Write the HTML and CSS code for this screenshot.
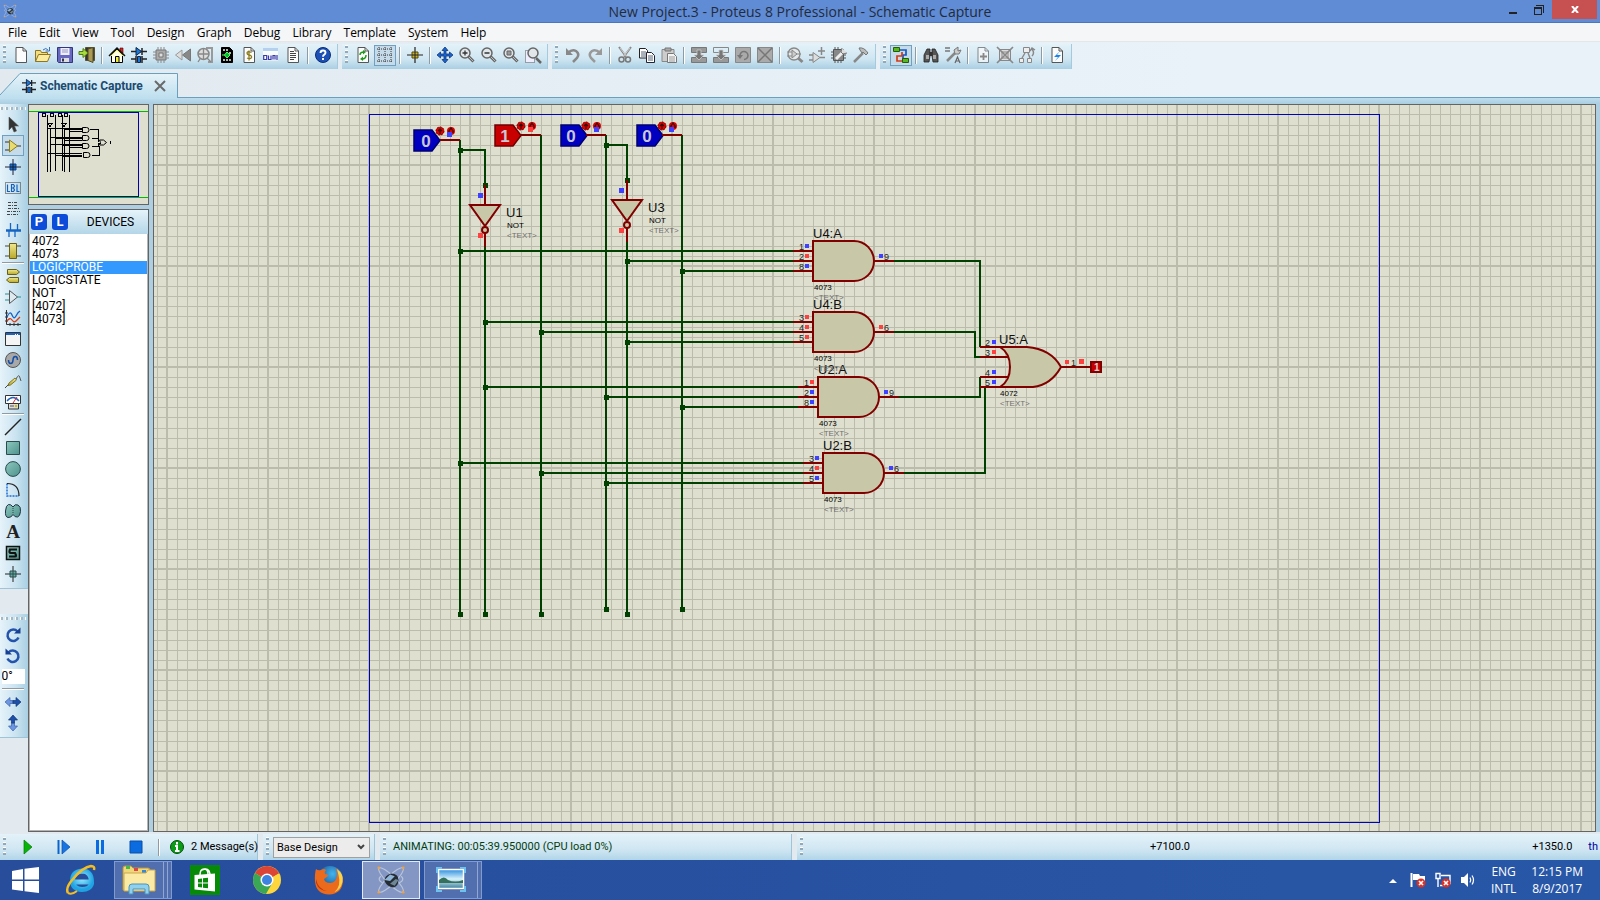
FILE: index.html
```html
<!DOCTYPE html>
<html lang="en">
<head>
<meta charset="utf-8">
<title>New Project.3 - Proteus 8 Professional - Schematic Capture</title>
<link rel="stylesheet" href="styles.css">
</head>
<body>
<svg class="defs" width="0" height="0" aria-hidden="true">
  <defs>
    <linearGradient id="teal" x1="0" y1="0" x2="1" y2="1"><stop offset="0" stop-color="#8cc8bf"/><stop offset="1" stop-color="#4e918c"/></linearGradient>
    <linearGradient id="gold" x1="0" y1="0" x2="0" y2="1"><stop offset="0" stop-color="#f0e890"/><stop offset="1" stop-color="#b8a828"/></linearGradient>
    <linearGradient id="sky" x1="0" y1="0" x2="0" y2="1"><stop offset="0" stop-color="#2f8fe0"/><stop offset=".5" stop-color="#d8f2fb"/><stop offset="1" stop-color="#3a7f9c"/></linearGradient>
    <radialGradient id="ie" cx=".5" cy=".4" r=".6"><stop offset="0" stop-color="#9be9ff"/><stop offset="1" stop-color="#1fa3e3"/></radialGradient>
    <radialGradient id="fox" cx=".6" cy=".3" r=".7"><stop offset="0" stop-color="#43b4ec"/><stop offset="1" stop-color="#123f86"/></radialGradient>
    <symbol id="i-page" viewBox="0 0 16 16"><path d="M3 .5h7l3.500 3.500v11.500h-10.500z" fill="#fcfcfc" stroke="#555"/><path d="M10 .5v3.500h3.500" fill="none" stroke="#555"/></symbol>
    <symbol id="i-comp" viewBox="0 0 16 16"><path d="M0 4.500h16M11 1v7M0 12h5M11 12h5" stroke="#222" stroke-width="1.500"/><path d="M5 .5v8l5.500-4z" fill="#1878d8" stroke="#124"/><path d="M5 9v7M11 9v7" stroke="#222" stroke-width="1.500"/><path d="M6.500 9.500h3v6h-3z" fill="#1878d8" stroke="#124"/></symbol>
    <symbol id="i-mag" viewBox="0 0 16 16"><path d="M9.500 9.500l5 5" stroke="#666" stroke-width="3"/><path d="M10 10l4 4" stroke="#bbb" stroke-width="1"/><circle cx="6" cy="6" r="5" fill="#e0e6ea" stroke="#666" stroke-width="1.500"/></symbol>
    <symbol id="i-proteus" viewBox="0 0 32 32"><g fill="none" stroke="#b9c6da" stroke-width="1.200"><ellipse cx="16" cy="16" rx="18" ry="4.500" transform="rotate(45 16 16)"/><ellipse cx="16" cy="16" rx="18" ry="4.500" transform="rotate(-45 16 16)"/><path d="M5 12q-4 4 2 7M27 12q4 4-2 7"/></g><path d="M9 17q0-6 7-8 8 0 8 7t-6 8q-6-1-9-7z" fill="#262c34"/><path d="M9 16l6-6 5 2-5 5z" fill="#8fb6d8"/><path d="M15 20l6-5 3 1-4 6z" fill="#6f8796"/><g fill="#f3a23a"><circle cx="3" cy="3" r="1.400"/><circle cx="29" cy="3" r="1.400"/><circle cx="3" cy="29" r="1.400"/><circle cx="29" cy="29" r="1.400"/></g></symbol>
    <symbol id="i-rot" viewBox="0 0 16 16"><path d="M12.500 4.500a5.700 5.700 0 1 0 1 6" fill="none" stroke="#2453ac" stroke-width="2.500"/><path d="M9 6.500h6.500v-6z" fill="#173f94"/></symbol>
    <symbol id="i-dbl" viewBox="0 0 16 16"><path d="M0 8l5-4.500v3h3v3h-3v3z" fill="#6d96e0" stroke="#3c62ae" stroke-width=".7"/><path d="M16 8l-5-4.500v3h-3v3h3v3z" fill="#1f4fa8" stroke="#133878" stroke-width=".7"/></symbol>
    <symbol id="i-err" viewBox="0 0 10 10"><circle cx="5" cy="5" r="4.500" fill="#d93327"/><path d="M3 3l4 4M7 3l-4 4" stroke="#fff" stroke-width="1.600"/></symbol>
  </defs>
</svg>

<div class="window">
  <header class="titlebar">
    <svg class="appicon" viewBox="0 0 32 32"><use href="#i-proteus"/></svg>
    <h1>New Project.3 - Proteus 8 Professional - Schematic Capture</h1>
    <div class="winctl">
      <button aria-label="Minimize"><svg width="10" height="10"><path d="M1 8h8" stroke="#222" stroke-width="2"/></svg></button>
      <button aria-label="Restore"><svg width="10" height="10" shape-rendering="crispEdges"><path d="M2 .5h7.500v7" fill="none" stroke="#222"/><path d="M.5 3h7v6.500h-7z" fill="none" stroke="#222"/><path d="M0 3h8" stroke="#222" stroke-width="2"/></svg></button>
      <button class="close" aria-label="Close"><svg width="8" height="7"><path d="M1 0l6 7M7 0l-6 7" stroke="#fff" stroke-width="2"/></svg></button>
    </div>
  </header>

  <nav class="menu">
    <button>File</button><button>Edit</button><button>View</button><button>Tool</button><button>Design</button><button>Graph</button><button>Debug</button><button>Library</button><button>Template</button><button>System</button><button>Help</button>
  </nav>

  <div class="toolbars">
    <div class="tb tb-file">
      <i class="grip"></i>
      <button aria-label="New"><svg viewBox="0 0 16 16"><use href="#i-page"/></svg></button>
      <button aria-label="Open"><svg viewBox="0 0 16 16"><path d="M.5 14.500v-11h5l1 2h6v3" fill="#f3dd7c" stroke="#8c7524"/><path d="M.5 14.500l3-7h12l-3 7z" fill="#fbeb9c" stroke="#8c7524"/><path d="M8 3q3-3 5 0M14.500 0v4h-4" fill="none" stroke="#3b6fb5"/></svg></button>
      <button aria-label="Save"><svg viewBox="0 0 16 16"><path d="M.5.5h15v15h-14l-1-1z" fill="#6868c0" stroke="#35357c"/><path d="M3.500 1h9v7h-9z" fill="#eef"/><path d="M4 11h8v4h-8z" fill="#ddd"/><path d="M5 11.500h2v3h-2z" fill="#335"/><path d="M5 3h6M5 5h6" stroke="#99b"/></svg></button>
      <button aria-label="Close project"><svg viewBox="0 0 16 16"><path d="M6.500.5h9v13h-9z" fill="#333" stroke="#5a5030"/><path d="M9 2l5-1.500v15l-5-2z" fill="#aa9a54" stroke="#554c22"/><path d="M0 4.500h4v-3l5 4.500-5 4.500v-3h-4z" fill="#a8dc38" stroke="#4f7c10"/></svg></button>
      <i class="sep"></i>
      <button aria-label="Home"><svg viewBox="0 0 16 16"><path d="M11 1h3v5h-3z" fill="#d22" stroke="#400" stroke-width=".6"/><path d="M2.500 8v7.500h11v-7.500l-5.500-6z" fill="#ffe" stroke="#000"/><path d="M0 9l8-8 8 8" fill="none" stroke="#111" stroke-width="1.500"/><path d="M2 9l6-6 6 6" fill="none" stroke="#ee4"/><path d="M6.500 9.500h3.500v6h-3.500z" fill="#ee3" stroke="#000"/></svg></button>
      <button aria-label="Schematic"><svg viewBox="0 0 16 16"><use href="#i-comp"/></svg></button>
      <button aria-label="PCB"><svg viewBox="0 0 16 16"><path d="M3 3h10v10h-10z" fill="#aaa" stroke="#777"/><path d="M6 6h4v4h-4z" fill="#ddd" stroke="#777"/><path d="M5 0v3M8 0v3M11 0v3M5 13v3M8 13v3M11 13v3M0 5h3M0 8h3M0 11h3M13 5h3M13 8h3M13 11h3" stroke="#888"/></svg></button>
      <button aria-label="3D view"><svg viewBox="0 0 16 16"><path d="M7 3v10l-6.500-5z" fill="#ddd" stroke="#999"/><path d="M15.500 2v12l-8-6z" fill="#888" stroke="#777"/></svg></button>
      <button aria-label="Gerber"><svg viewBox="0 0 16 16"><path d="M9 1h6v14h-4" fill="none" stroke="#999" stroke-width="2"/><circle cx="6.500" cy="7" r="5.500" fill="#ddd" stroke="#888" stroke-width="1.500"/><path d="M6.500 1.500v11M1 7h11M10 11l4 4M3 12l-2 3" stroke="#888" stroke-width="1.300"/></svg></button>
      <button aria-label="Design explorer"><svg viewBox="0 0 16 16"><path d="M2.500 .5h8l3 3v12h-11z" fill="#000" stroke="#000"/><path d="M4 3h5M4 13h8M11 5v3" stroke="#e8f8e8" stroke-width="1.500" stroke-dasharray="2 1"/><path d="M5.500 8l2.500-3 3 3-3 3z" fill="#0b3" stroke="#5f5"/><path d="M3 8h3" stroke="#5f5"/></svg></button>
      <button aria-label="Bill of materials"><svg viewBox="0 0 16 16"><use href="#i-page"/><path d="M10.500 5.500q-4-2-4.500.5 0 1.500 2 2 3 .5 2.500 2.500-1 2-4.500.5M8 3.500v10" fill="none" stroke="#8a7a18" stroke-width="1.300"/></svg></button>
      <button aria-label="Source code"><svg viewBox="0 0 16 16"><path d="M0 1.500h15v12h-15z" fill="#f8fbff"/><path d="M0 1h15v3h-15z" fill="#b4d0ee"/><path d="M.7 8.500h3v4h-3zM5.500 8.500v4h2.500v-4M10 12.500v-4h2v4M14 8v5" fill="none" stroke="#3838a8" stroke-width="1.200"/></svg></button>
      <button aria-label="Notes"><svg viewBox="0 0 16 16"><use href="#i-page"/><path d="M5 4.500h4M5 6.500h6M5 8.500h6M5 10.500h6M5 12.500h4" stroke="#444"/></svg></button>
      <i class="sep"></i>
      <button aria-label="Help"><svg viewBox="0 0 16 16"><circle cx="8" cy="8" r="7.500" fill="#1c50b4" stroke="#0a2c78"/><path d="M5.500 6q0-2.500 2.500-2.500t2.500 2.300q0 1.200-1.500 2-1 .5-1 2M8 11v2" fill="none" stroke="#fff" stroke-width="1.900"/></svg></button>
    </div>
    <div class="tb tb-view">
      <i class="grip"></i>
      <button aria-label="Redraw"><svg viewBox="0 0 16 16"><use href="#i-page"/><path d="M5 8q0-3 4-3M11 8q0 4-4 4" fill="none" stroke="#1c9a1c" stroke-width="1.500"/><path d="M8 3l3 2-3 2.500zM8 9.500l-3 2.500 3 2z" fill="#1c9a1c"/></svg></button>
      <button class="on" aria-label="Grid"><svg viewBox="0 0 16 16"><path d="M0 2h16M0 8h16M0 14h16M2 0v16M8 0v16M14 0v16" stroke="#333" stroke-dasharray="1 1"/></svg></button>
      <i class="sep"></i>
      <button aria-label="Origin"><svg viewBox="0 0 16 16"><path d="M0 8h16M8 0v16" stroke="#222" stroke-width="1.200"/><path d="M5 5h6v6h-6z" fill="#c8b428" stroke="#554a08"/><path d="M5 8h6M8 5v6" stroke="#222"/></svg></button>
      <i class="sep"></i>
      <button aria-label="Pan"><svg viewBox="0 0 16 16"><path d="M8 0l3 3.500h-2v3.500h3.500v-2l3.500 3-3.500 3v-2h-3.500v3.500h2l-3 3.500-3-3.500h2v-3.500h-3.500v2l-3.500-3 3.500-3v2h3.500v-3.500h-2z" fill="#1c62cc" stroke="#123a7c" stroke-width=".8"/></svg></button>
      <button aria-label="Zoom in"><svg viewBox="0 0 16 16"><use href="#i-mag"/><path d="M3.500 6h5M6 3.500v5" stroke="#333" stroke-width="1.300"/></svg></button>
      <button aria-label="Zoom out"><svg viewBox="0 0 16 16"><use href="#i-mag"/><path d="M3.500 6h5" stroke="#333" stroke-width="1.500"/></svg></button>
      <button aria-label="Zoom all"><svg viewBox="0 0 16 16"><use href="#i-mag"/><path d="M4 4h4v4h-4z" fill="#999" stroke="#666"/></svg></button>
      <button aria-label="Zoom area"><svg viewBox="0 0 16 16"><path d="M.5 3.500h9v12h-9z" fill="#eef" stroke="#555" stroke-dasharray="1 1"/><path d="M11 11l5 5" stroke="#666" stroke-width="2.500"/><circle cx="8" cy="6" r="5" fill="#e0e6ea" stroke="#666" stroke-width="1.500"/></svg></button>
    </div>
    <div class="tb tb-edit">
      <i class="grip"></i>
      <button aria-label="Undo"><svg viewBox="0 0 16 16"><path d="M3 6q4-4 8-2 4 3 1 7l-4 4" fill="none" stroke="#888" stroke-width="2.500"/><path d="M1 1v7h7z" fill="#888"/></svg></button>
      <button aria-label="Redo"><svg viewBox="0 0 16 16"><path d="M13 6q-4-4-8-2-4 3-1 7l4 4" fill="none" stroke="#999" stroke-width="2.500"/><path d="M15 1v7h-7z" fill="#999"/></svg></button>
      <i class="sep"></i>
      <button aria-label="Cut"><svg viewBox="0 0 16 16"><path d="M2 0l8 11M14 0l-8 11" stroke="#888" stroke-width="2"/><path d="M3 1l7 9M13 1l-7 9" stroke="#ddd" stroke-width=".8"/><circle cx="4.500" cy="12.500" r="2.500" fill="none" stroke="#777" stroke-width="1.500"/><circle cx="11" cy="12.500" r="2.500" fill="none" stroke="#777" stroke-width="1.500"/></svg></button>
      <button aria-label="Copy"><svg viewBox="0 0 16 16"><path d="M.5 1.500h6l2 2v7.500h-8z" fill="#fff" stroke="#222"/><path d="M2 5h5M2 7h5M2 9h5" stroke="#567"/><path d="M7.500 5.500h5l3 3v7h-8z" fill="#fff" stroke="#223"/><path d="M9 9h5M9 11h5M9 13h5" stroke="#567"/></svg></button>
      <button aria-label="Paste"><svg viewBox="0 0 16 16"><path d="M1 2.500h12v12h-12z" fill="#ccc" stroke="#888"/><path d="M4 1h6v3h-6z" fill="#aaa" stroke="#777"/><path d="M6.500 6.500h6l3 3v6h-9z" fill="#f4f4f4" stroke="#777"/><path d="M8 10h6M8 12h6M8 14h6" stroke="#999"/></svg></button>
      <i class="sep"></i>
      <button aria-label="Block copy"><svg viewBox="0 0 16 16"><path d="M.5.5h15v5h-15zM.5 10.500h15v5h-15z" fill="#999" stroke="#777"/><path d="M6 3h4v5h3l-5 5-5-5h3z" fill="#777" stroke="#ccc" stroke-width=".8"/></svg></button>
      <button aria-label="Block move"><svg viewBox="0 0 16 16"><path d="M.5.5h15v5h-15z" fill="none" stroke="#888"/><path d="M.5 10.500h15v5h-15z" fill="#999" stroke="#777"/><path d="M6 3h4v5h3l-5 5-5-5h3z" fill="#777" stroke="#ccc" stroke-width=".8"/></svg></button>
      <button aria-label="Block rotate"><svg viewBox="0 0 16 16"><path d="M.5.5h15v15h-15z" fill="#aaa" stroke="#888"/><path d="M5 9a4 4 0 1 1 4 3.500" fill="none" stroke="#777" stroke-width="1.500"/><path d="M2 8h6l-3 4z" fill="#777"/></svg></button>
      <button aria-label="Block delete"><svg viewBox="0 0 16 16"><path d="M.5.5h15v15h-15z" fill="#aaa" stroke="#888"/><path d="M1 1l14 14M15 1l-14 14" stroke="#777" stroke-width="1.500"/></svg></button>
      <i class="sep"></i>
      <button aria-label="Pick parts"><svg viewBox="0 0 16 16"><path d="M11 11l4.500 4" stroke="#888" stroke-width="3"/><circle cx="7" cy="7" r="6" fill="#e4e8ea" stroke="#888" stroke-width="1.300"/><path d="M0 5h5M0 9h5M9 7h5M5 3v8l5-4z" fill="#ccc" stroke="#888"/></svg></button>
      <button aria-label="Make device"><svg viewBox="0 0 16 16"><path d="M4 5.500v10l7-5z" fill="#ddd" stroke="#888"/><path d="M0 8h4M0 13h4M11 10.500h5M12.500 0v8M9 4h7" stroke="#888" stroke-width="1.500"/></svg></button>
      <button aria-label="Packaging tool"><svg viewBox="0 0 16 16"><path d="M2.500 2.500h10v11h-10z" fill="#888" stroke="#555"/><path d="M4 0v3M7 0v3M4 13v3M7 13v3M10 13v3M0 5h3M0 8h3M0 11h3M12 8h3M12 11h3" stroke="#555"/><path d="M5 12l6-6" stroke="#eee" stroke-width="3"/><path d="M11 1l-1 4 2 2 4-1" fill="#ddd" stroke="#777"/></svg></button>
      <button aria-label="Decompose"><svg viewBox="0 0 16 16"><path d="M1 15l9-9" stroke="#888" stroke-width="2.500"/><path d="M6 1q5-1 9 5l-2 2-3-3-1 1-2-3z" fill="#bbb" stroke="#777"/></svg></button>
    </div>
    <div class="tb tb-tools">
      <i class="grip"></i>
      <button class="on" aria-label="Wire autorouter"><svg viewBox="0 0 16 16"><path d="M6 3h7v5h-3v5" fill="none" stroke="#1458c8" stroke-width="1.700"/><path d="M9 5v4h-5v5h6" fill="none" stroke="#d43c14" stroke-width="1.700"/><path d="M.5.5h6v4h-6zM9.500 11.500h6v4h-6z" fill="#58b820" stroke="#245c08"/></svg></button>
      <i class="sep"></i>
      <button aria-label="Find"><svg viewBox="0 0 16 16"><path d="M1 8l3-6h3v7l-1 6h-5zM15 8l-3-6h-3v7l1 6h5z" fill="#555" stroke="#222" stroke-width=".8"/><path d="M3 8h3v4h-3zM10 8h3v4h-3z" fill="#aaa"/><path d="M6.500 5h3v4h-3z" fill="#333"/></svg></button>
      <button aria-label="Property tool"><svg viewBox="0 0 16 16"><path d="M0 1h5M0 4h5" stroke="#777" stroke-width="1.500"/><path d="M2 14l8-8" stroke="#888" stroke-width="2.500"/><path d="M13 0l-4 3 1 4 4 0 2-4-3 1z" fill="#ccc" stroke="#777"/><path d="M10 16l2.500-6 2.500 6M11 14h3" fill="none" stroke="#666" stroke-width="1.200"/></svg></button>
      <i class="sep"></i>
      <button aria-label="New sheet"><svg viewBox="0 0 16 16"><g opacity=".65"><use href="#i-page"/></g><path d="M5 9.500h7M8.500 6v7" stroke="#888" stroke-width="1.800"/></svg></button>
      <button aria-label="Remove sheet"><svg viewBox="0 0 16 16"><path d="M2.500 2.500h11v11h-11z" fill="#ddd" stroke="#888"/><path d="M5 5h6v6h-6z" fill="none" stroke="#888"/><path d="M0 0l16 16M16 0l-16 16" stroke="#888" stroke-width="1.700"/></svg></button>
      <button aria-label="Exit to parent"><svg viewBox="0 0 16 16"><path d="M4.500.5h6v5h-6zM.5 11.500h4v4h-4zM8.500 11.500h4v4h-4z" fill="#eee" stroke="#888"/><path d="M6 6l-3 5M9 6l2 5M13 2q3 4 0 7M11 4l2-3 3 2" fill="none" stroke="#888" stroke-width="1.400"/></svg></button>
      <i class="sep"></i>
      <button aria-label="Electrical rules check"><svg viewBox="0 0 16 16"><use href="#i-page"/><path d="M11 4l-6 6h4l-3 4 6-6h-4z" fill="#1c84e8"/></svg></button>
    </div>
  </div>

  <div class="tabs">
    <div class="tab">
      <svg class="tabshape" viewBox="0 0 178 26" preserveAspectRatio="none"><defs><linearGradient id="tg" x1="0" y1="0" x2="0" y2="1"><stop offset="0" stop-color="#e6f3f9"/><stop offset="1" stop-color="#bcdeee"/></linearGradient></defs><path d="M0 22 20 .5H177.500V26H0z" fill="url(#tg)"/><path d="M0 22 20 .5H177.500V25" fill="none" stroke="#6a9fbe"/></svg>
      <svg class="tabicon" viewBox="0 0 16 16"><use href="#i-comp"/></svg>
      <span>Schematic Capture</span>
      <button aria-label="Close tab"><svg width="12" height="12"><path d="M1 1l10 10M11 1l-10 10" stroke="#6a6a6a" stroke-width="2"/></svg></button>
    </div>
  </div>

  <main class="work">
    <aside class="modes">
      <div class="mode-set">
        <i class="hgrip"></i>
        <button aria-label="Selection"><svg viewBox="0 0 16 16"><path d="M4 0v13l3-3 2 5 2.500-1-2-5h4z" fill="#333" stroke="#555" stroke-width=".6"/></svg></button>
        <button class="on" aria-label="Component"><svg viewBox="0 0 16 16"><path d="M0 4h4M0 12h4M12 8h4" stroke="#333"/><path d="M4.500 2v12l8-6z" fill="#e8dc70" stroke="#8c7c20"/></svg></button>
        <button aria-label="Junction dot"><svg viewBox="0 0 16 16"><path d="M0 8h16M8 0v16" stroke="#223"/><path d="M5 5h6v6h-6z" fill="#1c6ccc" stroke="#123f80"/><path d="M5 8h6M8 5v6" stroke="#123"/></svg></button>
        <button aria-label="Wire label"><svg viewBox="0 0 16 16"><path d="M.5 2.500h15v11h-15z" fill="none" stroke="#333" stroke-dasharray="1 1"/><path d="M2.500 4.500v7h2.500M6.500 4.500v7h2l1-1.500-1-2h-2 2l1-2-1-1.500zM12 4.500v7h2.500" fill="none" stroke="#1460c0" stroke-width="1.200"/></svg></button>
        <button aria-label="Text script"><svg viewBox="0 0 16 16"><path d="M3 1.500h10M3 4.500h10M3 7.500h11M2 10.500h13M2 13.500h12" stroke="#444" stroke-dasharray="3 1 1 1"/></svg></button>
        <button aria-label="Bus"><svg viewBox="0 0 16 16"><path d="M1 8.500h15" stroke="#1464c4" stroke-width="2.500"/><path d="M5.500 1v7M12.500 2v6M4 9v6M10 9v6" stroke="#1464c4" stroke-width="1.300"/></svg></button>
        <button aria-label="Subcircuit"><svg viewBox="0 0 16 16"><path d="M0 3h16M0 13h16" stroke="#444"/><path d="M4.500.5h7v15h-7z" fill="url(#gold)" stroke="#6c6010"/></svg></button>
        <i class="hsep"></i>
        <button aria-label="Terminals"><svg viewBox="0 0 16 16"><path d="M2.500 1.500h9l3 2.500-3 2.500h-9z" fill="url(#gold)" stroke="#6c6010"/><path d="M13.500 9.500h-9l-3 2.500 3 2.500h9z" fill="url(#gold)" stroke="#6c6010"/></svg></button>
        <button aria-label="Device pins"><svg viewBox="0 0 16 16"><path d="M4.500 1.500v13l8-6.500z" fill="#dfeaf0" stroke="#555"/><path d="M0 5h4M0 11h4M12 8h4" stroke="#2c8c8c"/></svg></button>
        <button aria-label="Graph"><svg viewBox="0 0 16 16"><path d="M1.500 0v14.500h14.500M0 3h3M0 7h3M0 11h3M5 13v3M9 13v3M13 13v3" stroke="#333" fill="none"/><path d="M2 7q3-7 5-2t4 1 4-5" fill="none" stroke="#1460c8" stroke-width="1.300"/><path d="M2 11q3-4 5-1t4 1 4-4" fill="none" stroke="#d83c14" stroke-width="1.300"/></svg></button>
        <button aria-label="Active popup"><svg viewBox="0 0 16 16"><path d="M.5 1.500h15v13h-15z" fill="#f4f4f4" stroke="#333"/><path d="M1 2h14v2h-14z" fill="#1c62c0"/><path d="M10 3.500h4" stroke="#fff" stroke-dasharray="1 1"/></svg></button>
        <button aria-label="Generator"><svg viewBox="0 0 16 16"><circle cx="8" cy="8" r="7.500" fill="#a8a8a8" stroke="#555"/><path d="M3.500 8q0 3.500 2.200 3.500t2.300-3.500 2.300-3.500 2.200 3.500" fill="none" stroke="#1450a8" stroke-width="1.500"/></svg></button>
        <button aria-label="Probe"><svg viewBox="0 0 16 16"><path d="M0 15l4-4" stroke="#444"/><path d="M3 12.500l1-2.500 6-5 1.500 2-6 5z" fill="url(#gold)" stroke="#6c6010" stroke-width=".8"/><path d="M11 6q3-6 4-1l1 3" fill="none" stroke="#555"/></svg></button>
        <button aria-label="Instruments"><svg viewBox="0 0 16 16"><path d="M.5 1.500h15v8h-15z" fill="#fff" stroke="#333"/><path d="M2 7q6-7 12 0" fill="none" stroke="#1c62c0" stroke-width="1.300"/><path d="M8 9l4-6" stroke="#d22"/><path d="M3.500 9.500h10v5.500h-10z" fill="#ddd" stroke="#333"/><path d="M5 12h4" stroke="#555"/><circle cx="11" cy="12" r="1.200" fill="#cb0"/></svg></button>
        <i class="hsep"></i>
        <button aria-label="Line"><svg viewBox="0 0 16 16"><path d="M0 16L16 0" stroke="#222" stroke-width="1.400"/></svg></button>
        <button aria-label="Box"><svg viewBox="0 0 16 16"><path d="M1.500 1.500h13v13h-13z" fill="url(#teal)" stroke="#2c4c4c"/></svg></button>
        <button aria-label="Circle"><svg viewBox="0 0 16 16"><circle cx="8" cy="8" r="7.400" fill="url(#teal)" stroke="#2c4c4c"/></svg></button>
        <button aria-label="Arc"><svg viewBox="0 0 16 16"><path d="M2 1.500v12.500h12" fill="none" stroke="#1c6cd8" stroke-width="1.500" stroke-dasharray="2 1"/><path d="M2 1.500q12 0 12 12.500" fill="none" stroke="#222" stroke-width="1.200"/></svg></button>
        <button aria-label="Path"><svg viewBox="0 0 16 16"><path d="M8 4q-2-3-4.500-2.500t-3 6.500 2.500 6.500 5-3q2 3 4.500 2.500t3-5.500-2.500-6.500-5 2z" fill="url(#teal)" stroke="#234"/><path d="M8 5v6" stroke="#2c4c4c" stroke-dasharray="1 1"/></svg></button>
        <button class="serif-a">A</button>
        <button aria-label="Symbol"><svg viewBox="0 0 16 16"><path d="M1.500 1.500h13v13h-13z" fill="url(#teal)" stroke="#111" stroke-width="1.500"/><path d="M12 4.500h-7q-1.500 3.500 1 3.500h4q2 3.500 0 3.500h-6" fill="none" stroke="#111" stroke-width="2.200"/></svg></button>
        <button aria-label="Marker"><svg viewBox="0 0 16 16"><path d="M0 8h16M8 0v16" stroke="#222"/><path d="M5 5h6v6h-6z" fill="#62aca4" stroke="#2c4c4c"/><path d="M5 8h6M8 5v6" stroke="#2c4c4c"/></svg></button>
      </div>
      <div class="mode-set">
        <i class="hgrip"></i>
        <button aria-label="Rotate clockwise"><svg viewBox="0 0 16 16"><use href="#i-rot"/></svg></button>
        <button aria-label="Rotate anticlockwise"><svg viewBox="0 0 16 16"><g transform="matrix(-1 0 0 1 16 0)"><use href="#i-rot"/></g></svg></button>
        <input class="angle" type="text" value="0°" aria-label="Angle">
        <i class="hsep"></i>
        <button aria-label="Mirror horizontally"><svg viewBox="0 0 16 16"><use href="#i-dbl"/></svg></button>
        <button aria-label="Mirror vertically"><svg viewBox="0 0 16 16"><g transform="rotate(-90 8 8)"><use href="#i-dbl"/></g></svg></button>
      </div>
    </aside>

    <section class="side">
      <div class="overview">
        <svg viewBox="29 105 119 99" shape-rendering="crispEdges">
          <path d="M29 111.500h120M29 197.500h120" stroke="#0b0"/>
          <rect x="38.500" y="112.500" width="100" height="84" fill="none" stroke="#0000b0"/>
          <path d="M47.500 115v57M50.500 128v44M55.500 115v56M62.500 115v56M64.500 128v44M69.500 115v57" fill="none" stroke="#000"/>
          <path d="M48 128.500h34M65 129.500h17M70 131.500h12M51 137.500h31M56 138.500h26M65 140h17M51 144.500h31M63 145.500h19M70 147.500h12M48 153.500h34M56 155h26M63 156h19M90 129.500h8.500v12M92 138h6M92 146.500h6.500v-3h2M92 155.500h7.500v-10" fill="none" stroke="#000"/>
          <path d="M42 113.500h3v3h-3zM50 113.500h3v3h-3zM58 113.500h3v3h-3zM64.500 113.500h3v3h-3zM48 123.500h4l-2 3zM62 123.500h4l-2 3z" fill="none" stroke="#000"/>
          <g fill="none" stroke="#000" shape-rendering="auto"><path id="mg" d="M82.500 127.500h4a2.500 2.500 0 0 1 0 5h-4z"/><use href="#mg" y="8"/><use href="#mg" y="16"/><use href="#mg" x="1" y="25"/><path d="M99.500 140h4l3 2.500-3 2.500h-4l1-2.500z"/><path d="M110.500 141v3"/></g>
        </svg>
      </div>
      <div class="devices">
        <div class="dev-head"><button>P</button><button>L</button><span>DEVICES</span></div>
        <ul>
          <li>4072</li><li>4073</li><li class="sel">LOGICPROBE</li><li>LOGICSTATE</li><li>NOT</li><li>[4072]</li><li>[4073]</li>
        </ul>
      </div>
    </section>

    <section class="sheet">
      <svg width="100%" height="100%">
        <defs>
          <pattern id="grid" patternUnits="userSpaceOnUse" x="166" y="164" width="101" height="101">
            <rect width="101" height="101" fill="#dfdfcf"/>
            <path d="M11.500 0v101M21.500 0v101M31.500 0v101M41.500 0v101M52.500 0v101M62.500 0v101M72.500 0v101M82.500 0v101M92.500 0v101M0 11.500h101M0 21.500h101M0 31.500h101M0 41.500h101M0 51.500h101M0 62.500h101M0 72.500h101M0 82.500h101M0 92.500h101" stroke="#bcbcac"/>
            <path d="M1 0v101M0 1h101" stroke="#bcbcac" stroke-width="2"/>
          </pattern>
          <g id="state"><path d="M0 0h18l8 10.500-8 10.500h-18z" stroke-width="1.500"/></g>
          <g id="tog"><circle cx="26" cy="1" r="4" fill="#e00000"/><circle cx="37" cy="1" r="4" fill="#e00000"/><path d="M26 4v-5M24 1l2-2 2 2M35 3v-2l2-3 2 3v2" fill="none" stroke="#300" stroke-width="1.200"/><circle cx="26" cy="1" r="4" fill="none" stroke="#700" stroke-dasharray="2 1"/><path d="M26 10h20" stroke="#800000" stroke-width="2"/></g>
          <g id="not" fill="#c8c8a8" stroke="#800000" stroke-width="2"><path d="M0-20v20M0 28v14"/><path d="M-15 0h30l-15 21z"/><circle cy="25" r="3"/></g>
          <g id="and" fill="#c8c8a8" stroke="#800000" stroke-width="2"><path d="M-20 10h20M-20 20h20M-20 30h20M61 20h20"/><path d="M0 0h41a20 20 0 0 1 0 40h-41z"/></g>
          <rect id="sq" x="-2" y="-2" width="4" height="4"/>
          <rect id="sq5" x="-3" y="-2" width="5" height="5"/>
          <rect id="dot" x="-2" y="-2" width="5" height="5"/>
        </defs>
        <g transform="translate(-154 -105)">
          <rect x="154" y="105" width="100%" height="100%" fill="url(#grid)"/>
          <rect x="369.500" y="114.500" width="1010" height="708" fill="none" stroke="#0000c0"/>
          <g class="wire">
            <path d="M460 140v474M460 150h25v35M485 245v369M541 135v479M606 135v474M606 145h21v35M627 240v374M682 135v474"/>
            <path d="M460 251h333M627 261h166M682 271h111M485 322h308M541 332h252M627 342h166M485 387h313M606 397h192M682 407h116M460 463h343M541 473h262M606 483h197"/>
            <path d="M894 261h86v86M894 332h81v25h6M899 397h81v-20M904 473h81v-86"/>
          </g>
          <g fill="#004000">
            <use href="#dot" x="460" y="150"/><use href="#dot" x="485" y="185"/><use href="#dot" x="606" y="145"/><use href="#dot" x="627" y="180"/>
            <use href="#dot" x="460" y="251"/><use href="#dot" x="627" y="261"/><use href="#dot" x="682" y="271"/><use href="#dot" x="485" y="322"/><use href="#dot" x="541" y="332"/><use href="#dot" x="627" y="342"/><use href="#dot" x="485" y="387"/><use href="#dot" x="606" y="397"/><use href="#dot" x="682" y="407"/><use href="#dot" x="460" y="463"/><use href="#dot" x="541" y="473"/><use href="#dot" x="606" y="483"/>
            <use href="#dot" x="460" y="614"/><use href="#dot" x="485" y="614"/><use href="#dot" x="541" y="614"/><use href="#dot" x="606" y="609"/><use href="#dot" x="627" y="614"/><use href="#dot" x="682" y="609"/>
          </g>
          <g fill="#0000c0" stroke="#000070"><use href="#state" x="414" y="130"/><use href="#state" x="561" y="125"/><use href="#state" x="637" y="125"/></g>
          <g fill="#c80000" stroke="#700000"><use href="#state" x="495" y="125"/></g>
          <use href="#tog" x="414" y="130"/><use href="#tog" x="495" y="125"/><use href="#tog" x="560" y="125"/><use href="#tog" x="636" y="125"/>
          <g class="bit"><text x="426" y="147">0</text><text x="505" y="142">1</text><text x="571" y="142">0</text><text x="647" y="142">0</text></g>
          <use href="#not" x="485" y="205"/><use href="#not" x="627" y="200"/>
          <use href="#and" x="813" y="241"/><use href="#and" x="813" y="312"/><use href="#and" x="818" y="377"/><use href="#and" x="823" y="453"/>
          <g fill="#c8c8a8" stroke="#800000" stroke-width="2">
            <path d="M1000 347h27q24 2 34 20-10 18-28 20h-33q10-6 10-20t-10-20z"/>
            <path d="M980 347h21M980 357h29M980 377h29M980 387h21M1061 367h29"/>
            <rect x="1091" y="362" width="10" height="10" fill="#c80000"/>
          </g>
          <g fill="#4040ff">
            <use href="#sq5" x="450" y="134"/><use href="#sq5" x="597" y="129"/><use href="#sq5" x="672" y="129"/><use href="#sq5" x="481" y="195"/><use href="#sq5" x="622" y="190"/>
            <use href="#sq" x="807" y="246"/><use href="#sq" x="807" y="266"/><use href="#sq" x="881" y="256"/><use href="#sq" x="812" y="392"/><use href="#sq" x="812" y="402"/><use href="#sq" x="886" y="392"/><use href="#sq" x="817" y="458"/><use href="#sq" x="817" y="478"/><use href="#sq" x="891" y="468"/>
            <use href="#sq" x="994" y="342"/><use href="#sq" x="994" y="372"/><use href="#sq" x="994" y="382"/>
          </g>
          <g fill="#ff4040">
            <use href="#sq5" x="531" y="129"/><use href="#sq5" x="481" y="235"/><use href="#sq5" x="622" y="230"/>
            <use href="#sq" x="807" y="256"/><use href="#sq" x="807" y="317"/><use href="#sq" x="807" y="327"/><use href="#sq" x="807" y="337"/><use href="#sq" x="881" y="327"/><use href="#sq" x="812" y="382"/><use href="#sq" x="817" y="468"/><use href="#sq" x="994" y="352"/><use href="#sq" x="1067" y="362"/><use href="#sq5" x="1082" y="361"/>
          </g>
          <g class="pin">
            <text x="799" y="250">1</text><text x="799" y="260">2</text><text x="799" y="270">8</text><text x="884" y="260">9</text>
            <text x="799" y="321">3</text><text x="799" y="331">4</text><text x="799" y="341">5</text><text x="884" y="331">6</text>
            <text x="804" y="386">1</text><text x="804" y="396">2</text><text x="804" y="406">8</text><text x="889" y="396">9</text>
            <text x="809" y="462">3</text><text x="809" y="472">4</text><text x="809" y="482">5</text><text x="894" y="472">6</text>
            <text x="985" y="346">2</text><text x="985" y="356">3</text><text x="985" y="376">4</text><text x="985" y="386">5</text><text x="1071" y="366">1</text>
          </g>
          <text class="probe" x="1094" y="371">1</text>
          <g class="ref">
            <text x="506" y="217">U1</text><text x="648" y="212">U3</text><text x="813" y="238">U4:A</text><text x="813" y="309">U4:B</text><text x="818" y="374">U2:A</text><text x="823" y="450">U2:B</text><text x="999" y="344">U5:A</text>
          </g>
          <g class="val">
            <text x="507" y="228">NOT</text><text x="649" y="223">NOT</text><text x="814" y="290">4073</text><text x="814" y="361">4073</text><text x="819" y="426">4073</text><text x="824" y="502">4073</text><text x="1000" y="396">4072</text>
          </g>
          <g class="val dim">
            <text x="507" y="238">&lt;TEXT&gt;</text><text x="649" y="233">&lt;TEXT&gt;</text><text x="814" y="300">&lt;TEXT&gt;</text><text x="814" y="371">&lt;TEXT&gt;</text><text x="819" y="436">&lt;TEXT&gt;</text><text x="824" y="512">&lt;TEXT&gt;</text><text x="1000" y="406">&lt;TEXT&gt;</text>
          </g>
        </g>
      </svg>
    </section>
  </main>

  <footer class="status">
    <div class="sp sp-sim">
      <i class="grip"></i>
      <button aria-label="Play"><svg width="16" height="16"><path d="M4 1v14l8-7z" fill="#08b408" stroke="#067806" stroke-width=".7"/></svg></button>
      <button aria-label="Step"><svg width="16" height="16"><path d="M2.500 1v14" stroke="#0a64d0" stroke-width="2"/><path d="M6 1v14l8-7z" fill="#1874e0" stroke="#0a4ea8" stroke-width=".7"/></svg></button>
      <button aria-label="Pause"><svg width="16" height="16"><path d="M5.500 1v14M10.500 1v14" stroke="#0a6ce0" stroke-width="3"/></svg></button>
      <button aria-label="Stop"><svg width="16" height="16"><path d="M2 2h12v12h-12z" fill="#0a6ce0" stroke="#0a4ea8"/></svg></button>
      <i class="sep"></i>
      <svg class="info" width="14" height="14"><circle cx="7" cy="7" r="6.500" fill="#0a9c14" stroke="#064e0a"/><path d="M7 2v2.500M5 6h2v5M5 11h4.500" fill="none" stroke="#fff" stroke-width="2"/></svg>
      <span>2 Message(s)</span>
    </div>
    <div class="sp sp-design">
      <i class="grip"></i>
      <div class="pick">
        <select aria-label="Variant"><option>Base Design</option></select>
        <svg width="8" height="6"><path d="M1 1l3 3 3-3" fill="none" stroke="#444" stroke-width="2"/></svg>
      </div>
    </div>
    <div class="sp sp-anim"><i class="grip"></i><span>ANIMATING: 00:05:39.950000 (CPU load 0%)</span></div>
    <div class="sp sp-coord"><i class="grip"></i><span class="cx">+7100.0</span><span class="cy">+1350.0</span><span class="unit">th</span></div>
  </footer>
</div>

<footer class="taskbar">
  <button class="t-start" aria-label="Start"><svg width="27" height="26"><path d="M0 4l11-2v10.500h-11zM12.500 1.700l14.500-1.700v12.500h-14.500zM0 14h11v10l-11-1.500zM12.500 14h14.500v12l-14.500-1.800z" fill="#fff"/></svg></button>
  <button class="t-ie" aria-label="Internet Explorer"><svg width="32" height="32" viewBox="0 0 32 32"><path d="M26.500 20q-2 5.500-9.500 5.500-9.500-.5-9.500-9t9.500-9.500q9.500 0 9.500 11h-18.500" fill="none" stroke="url(#ie)" stroke-width="5"/><path d="M3 29q-3-5 5-14 10-12 18-13 4 0 3 4" fill="none" stroke="#f5bd22" stroke-width="2.500"/><path d="M3 29q4 2 9-2" fill="none" stroke="#f5bd22" stroke-width="2"/></svg></button>
  <button class="t-app stack" aria-label="File Explorer"><svg width="34" height="30" viewBox="0 0 34 30"><path d="M1 3q0-2 2-2h6l2 2h15q2 0 2 2v20h-27z" fill="#f2d77a" stroke="#b9933a"/><path d="M4 1h4v3h-4z" fill="#4b4"/><path d="M12 3h4v3h-4z" fill="#d44"/><path d="M20 5h4v3h-4z" fill="#38d"/><path d="M2 8h22l2-3h7v21h-31z" fill="#fbeaa6" stroke="#c9a84c"/><path d="M7 29v-7q0-3 3-3h14q3 0 3 3v7h-4v-5h-12v5z" fill="#8fd0ee" stroke="#4a94bc"/></svg></button>
  <button class="t-store" aria-label="Store"><svg width="30" height="30"><path d="M0 0h30v30h-30z" fill="#078a07"/><path d="M4.500 10l20.500-1.500v18l-20.500-2z" fill="#fff"/><path d="M10 10q0-6 4-6t4 5M12 5q7-3 8 4" fill="none" stroke="#fff" stroke-width="1.500"/><path d="M8 14l4-.5v4h-4zM13 13.300l5-.5v4.700h-5zM8 18.500h4v4l-4-.5zM13 18.500h5v4.700l-5-.5z" fill="#078a07"/></svg></button>
  <button class="t-chrome" aria-label="Chrome"><svg width="30" height="30" viewBox="0 0 30 30"><circle cx="15" cy="15" r="14" fill="#fdd63e"/><path d="M15 15L2.900 8a14 14 0 0 1 24.200 0z" fill="#dc4437"/><path d="M15 15L2.900 8a14 14 0 0 0 11 21l6.500-11z" fill="#3aa757"/><path d="M27.100 8h-12.100v7z" fill="#dc4437"/><circle cx="15" cy="15" r="6.500" fill="#fff"/><circle cx="15" cy="15" r="5" fill="#3f83e0"/></svg></button>
  <button class="t-fox" aria-label="Firefox"><svg width="30" height="30" viewBox="0 0 30 30"><circle cx="16" cy="14" r="13" fill="url(#fox)"/><path d="M2 4q2 2 5 1 3-2 5 0-2 2-1 4 3 0 3 2l-4 3q1 4 6 4 6 0 7-7 1-5-2-8 8 4 8 13-1 13-14 13.500-13-.5-14-13-.5-8 1-12.500z" fill="#ec6a1c"/><path d="M23 4q7 5 5.500 13-2 8-8 10 7-6 4-17z" fill="#fbd24c"/><path d="M2 14q2 10 11 12-8 0-11-8z" fill="#c4380f"/></svg></button>
  <button class="t-app active" aria-label="Proteus"><svg width="30" height="30" viewBox="0 0 32 32"><use href="#i-proteus"/></svg></button>
  <button class="t-app stack photo" aria-label="Photo Viewer"><svg width="30" height="26" viewBox="0 0 30 26"><path d="M2.500 2.500h25v19h-25z" fill="url(#sky)" stroke="#fff" stroke-width="1.500"/><path d="M3 13q5-5 9 0 7 3 15 0v3h-24z" fill="#34705c"/><path d="M1 6v-5h5M24 1h5v5M29 19v5h-5M6 24h-5v-5" fill="none" stroke="#6dc2f0" stroke-width="2"/></svg></button>
  <div class="tray">
    <svg width="8" height="5"><path d="M0 5l4-4 4 4z" fill="#fff"/></svg>
    <svg width="16" height="16" viewBox="0 0 16 16"><path d="M1.500 1v14" stroke="#fff" stroke-width="2"/><path d="M3 2h6l1 2h5v6h-6l-1-2h-5z" fill="#fff"/><use href="#i-err" x="6" y="6" width="10" height="10"/></svg>
    <svg width="16" height="16" viewBox="0 0 16 16"><path d="M1 1.500h4v5h-4zM3 6v9M6 3.500h9v8h-8M5 13.500h4" fill="none" stroke="#fff" stroke-width="1.400"/><use href="#i-err" x="6" y="6" width="10" height="10"/></svg>
    <svg width="16" height="16" viewBox="0 0 16 16"><path d="M1 5h3l4-4v14l-4-4h-3z" fill="#fff"/><path d="M10 5.500q1.500 2.500 0 5M12 3.500q3 4.500 0 9" fill="none" stroke="#fff" stroke-width="1.200"/></svg>
    <div class="lang">ENG<br>INTL</div>
    <div class="clock">12:15 PM<br>8/9/2017</div>
  </div>
</footer>
</body>
</html>
```

FILE: styles.css
```css
* { box-sizing: border-box; }
html, body { height: 100%; }
body { margin: 0; display: flex; flex-direction: column; overflow: hidden; background: #e2eaf0; color: #000; font: 12px/14px Roboto, "Liberation Sans", sans-serif; }
button { margin: 0; padding: 0; border: 0; background: none; font: inherit; color: inherit; display: flex; flex: none; align-items: center; justify-content: center; }
.defs { display: block; flex: none; height: 0; }
.window { flex: 1; min-height: 0; display: flex; flex-direction: column; }

.titlebar { display: grid; grid-template-columns: 116px 1fr 116px; height: 23px; background: #608bd5; border-bottom: 1px solid #4a76bd; }
.appicon { width: 14px; height: 14px; margin: 4px 3px; overflow: visible; }
.titlebar h1 { margin: 0; text-align: center; white-space: nowrap; font: 14px/23px "Open Sans", "Noto Sans", sans-serif; color: #222b3a; }
.winctl { display: flex; justify-content: flex-end; padding-right: 3px; height: 19px; }
.winctl button { width: 26px; }
.winctl .close { width: 45px; background: #c75050; }

.menu { display: flex; gap: 12px; height: 19px; padding-left: 8px; background: #f5f6f7; border-bottom: 1px solid #e6e6e6; font: 12px/18px "Open Sans", "Noto Sans", sans-serif; }
.menu button { padding-top: 1px; }

.toolbars { display: flex; gap: 4px; height: 31px; padding: 2px 0 4px; background: linear-gradient(90deg, #e2eaf0, #e9f2f9 75%); }
.tb { display: flex; flex: none; align-items: center; padding-bottom: 3px; background: linear-gradient(#e4f2f9, #cfe6f2 60%, #a9cfe3); border-right: 1px solid #a4cadd; }
.tb-file { width: 338px; }
.tb-view { width: 206px; }
.tb-edit { width: 324px; }
.tb-tools { width: 192px; }
.tb button { width: 22px; height: 21px; }
.tb button svg { width: 16px; height: 16px; overflow: visible; }
.tb .on, .modes .on { background: #c5dbea; outline: 1px solid #6fa0c0; outline-offset: -1px; }
.grip { flex: none; width: 3px; height: 20px; margin: 0 4px 0 3px; background: repeating-linear-gradient(#fff 0 1px, #93a9b7 1px 3px, transparent 3px 5px); }
.sep { flex: none; width: 2px; height: 17px; margin: 0 3px; background: #8e9ba3; border-right: 1px solid #fff; }

.tabs { display: flex; align-items: flex-end; height: 31px; padding-bottom: 6px; background: linear-gradient(#6a9fbe, #6a9fbe) 0 24px / 100% 1px no-repeat, linear-gradient(#bedeee, #aacde0) 0 25px / 100% 6px no-repeat, linear-gradient(90deg, #e2eaf0, #e9f2f9 75%); }
.tab { display: grid; grid-template-columns: 22px 18px 114px 12px 12px; width: 178px; height: 25px; align-items: center; color: #1c4a70; font-weight: 700; }
.tab > * { grid-row: 1; }
.tabshape { grid-column: 1 / -1; width: 178px; height: 26px; }
.tabicon { grid-column: 2; width: 14px; height: 16px; overflow: visible; }
.tab span { grid-column: 3; white-space: nowrap; padding-bottom: 1px; }
.tab button { grid-column: 4; }

.work { flex: 1; min-height: 0; display: flex; padding-right: 4px; background: #aecfe1; }
.modes { width: 28px; display: flex; flex-direction: column; gap: 25px; background: #e2eaf0; }
.mode-set { display: flex; flex-direction: column; align-items: center; padding: 0 2px 4px 0; background: linear-gradient(90deg, #e6f3fa, #cbe4f1 55%, #a9cfe3); border-bottom: 1px solid #9fc4d8; }
.mode-set button { width: 22px; height: 21px; }
.mode-set button svg { width: 16px; height: 16px; overflow: visible; }
.hgrip { width: 26px; height: 3px; margin: 3px 0 4px; background: repeating-linear-gradient(90deg, #fff 0 1px, #a5b8c4 1px 3px, transparent 3px 5px); }
.hsep { width: 22px; height: 2px; margin: 1px 0; background: #8e9ba3; border-bottom: 1px solid #fff; }
.mode-set .serif-a { font: 700 19px/20px "Liberation Serif", serif; color: #222; }
.angle { width: 23px; height: 15px; margin: 3px 0; padding: 0; border: 0; background: #fff; font: 12px/15px Roboto, sans-serif; }

.side { width: 121px; display: flex; flex-direction: column; gap: 4px; }
.overview { height: 101px; border: 1px solid #646464; background: #dfdfcf; }
.overview svg { display: block; width: 100%; height: 100%; }
.devices { flex: 1; display: flex; flex-direction: column; border: 1px solid #646464; background: #fff; }
.dev-head { display: flex; align-items: center; height: 24px; padding-left: 2px; gap: 5px; background: linear-gradient(#e6f3fa, #b3d6e8); }
.dev-head button { width: 16px; height: 16px; border-radius: 3px; background: #0c4cd8; color: #fff; font-weight: 700; font-size: 13px; }
.dev-head span { flex: 1; text-align: center; }
.devices ul { flex: 1; margin: 0; padding: 1px 0 0; list-style: none; font-size: 12px; line-height: 13px; border: solid #b4b4b4; border-width: 0 1px 1px; }
.devices li { padding-left: 2px; }
.devices .sel { background: #3399ff; color: #fff; }

.sheet { flex: 1; min-width: 0; margin-left: 4px; border: 1px solid #646464; background: #dfdfcf; }
.sheet svg { display: block; }
.sheet text { font-family: "Liberation Sans", Arial, sans-serif; }
.wire { fill: none; stroke: #004000; stroke-width: 2; }
.bit text { font-size: 17px; font-weight: 700; text-anchor: middle; fill: #c8c8d4; }
.pin text { font-size: 9px; fill: #222; }
.probe { font-size: 10px; font-weight: 700; fill: #e0d0d0; }
.ref text { font-size: 13px; fill: #111; }
.val text { font-size: 8px; fill: #000; }
.val.dim text { fill: #707070; }

.status { display: flex; gap: 5px; height: 28px; padding-top: 2px; background: #e2eaf0; font-size: 11px; }
.sp { display: flex; flex: none; align-items: center; background: linear-gradient(#e4f2f9, #cfe6f2 60%, #b0d5e8); border-right: 1px solid #9fc4d8; white-space: nowrap; }
.sp-sim { width: 258px; }
.sp-sim button { width: 36px; height: 22px; }
.sp-sim .sep { margin: 0 10px 0 4px; }
.info { flex: none; margin-right: 7px; }
.sp-design { width: 112px; }
.pick { display: grid; align-items: center; }
.pick > * { grid-area: 1 / 1; }
.pick svg { justify-self: end; margin-right: 5px; pointer-events: none; }
.pick select { appearance: none; width: 97px; height: 21px; margin: 0; padding: 0 0 0 3px; border: 1px solid #a0a0a0; border-radius: 0; background: #ececec; font: 11px Roboto, sans-serif; color: #000; }
.sp-anim { width: 412px; color: #063d10; }
.sp-anim span { margin-left: 3px; }
.sp-coord { flex: 1; border-right: 0; }
.cx { margin-left: 343px; }
.cy { margin-left: auto; }
.unit { margin-left: 16px; padding-right: 2px; color: #0000a0; }

.taskbar { display: flex; flex: none; align-items: center; height: 40px; background: linear-gradient(90deg, #274d9b, #2855a4 80%, #2857a7); color: #fff; }
.t-start { width: 52px; margin-right: 12px; }
.t-start svg { margin-left: -2px; }
.t-ie { width: 34px; margin-right: 16px; }
.t-app { width: 58px; height: 38px; border: 1px solid #829bcb; background: #516fae; }
.t-app.stack { box-shadow: inset -3px 0 #516fae, inset -4px 0 #91a7d1, inset -7px 0 #516fae, inset -8px 0 #91a7d1; padding-right: 8px; }
.t-store { width: 30px; margin-left: 18px; }
.t-chrome { width: 30px; margin-left: 32px; }
.t-fox { width: 30px; margin: 0 18px 0 32px; }
.t-app.active { background: #8497c4; border-color: #e4e9f4; margin-right: 4px; }
.t-app.photo { box-shadow: inset -3px 0 #516fae, inset -4px 0 #91a7d1; padding-right: 4px; }
.tray { display: flex; align-items: center; margin-left: auto; gap: 9px; padding-right: 17px; font: 12px/17px "Open Sans", "Noto Sans", sans-serif; }
.tray svg:first-child { margin-right: 4px; }
.tray .lang { margin-left: 6px; text-align: center; }
.tray .clock { margin-left: 6px; text-align: center; }
```
